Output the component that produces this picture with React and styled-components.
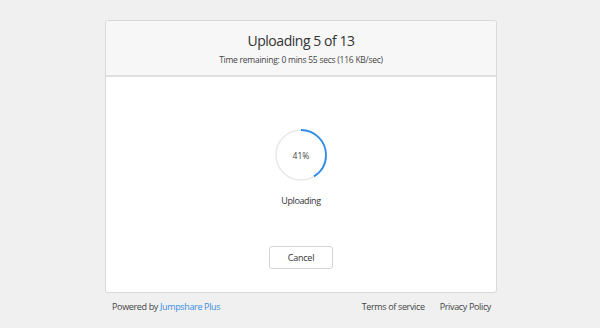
import React from 'react'
import styled, { createGlobalStyle } from 'styled-components'

const GlobalStyle = createGlobalStyle`
html, body {
  margin: 0;
  padding: 0;
  background: #f0f0f0;
  font-family: "Open Sans", "Noto Sans", sans-serif;
  color: #333;
}
`

const Page = styled.div`
width: 392px;
margin: 20px 0 0 105px;
`

const Card = styled.div`
background: #fff;
border: 1px solid #d9d9d9;
border-radius: 3px;
height: 273px;
box-sizing: border-box;
display: flex;
flex-direction: column;
overflow: hidden;
`

const Header = styled.div`
background: #f7f7f8;
border-bottom: 2px solid #e0e0e2;
height: 56px;
box-sizing: border-box;
display: flex;
flex-direction: column;
align-items: center;
padding-top: 10px;
`

const Title = styled.h1`
margin: 0;
font-size: 14px;
font-weight: 400;
letter-spacing: -0.45px;
line-height: 20px;
color: #333;
`

const Sub = styled.div`
margin-top: 2px;
font-size: 8.5px;
letter-spacing: -0.25px;
line-height: 14px;
color: #444;
`

const Body = styled.div`
flex: 1;
display: flex;
flex-direction: column;
align-items: center;
padding-top: 52px;
`

const Ring = styled.div`
position: relative;
width: 52px;
height: 52px;
`

const Percent = styled.span`
position: absolute;
inset: 0;
display: flex;
align-items: center;
justify-content: center;
font-size: 8.5px;
color: #444;
`

const Label = styled.div`
margin-top: 13px;
font-size: 9px;
letter-spacing: -0.4px;
line-height: 14px;
color: #333;
`

const Button = styled.button`
margin-top: 38px;
width: 64px;
height: 23px;
background: #fff;
border: 1px solid #d4d4d4;
border-radius: 3px;
font-family: inherit;
font-size: 9px;
letter-spacing: -0.2px;
color: #333;
padding: 0;
`

const Footer = styled.div`
display: flex;
align-items: center;
padding: 7px 6px 0 7px;
font-size: 9px;
letter-spacing: -0.35px;
line-height: 14px;
color: #444;
`

const Link = styled.a`
color: ${props => props.accent ? '#3a8ee6' : '#444'};
text-decoration: none;
margin-left: ${props => props.gap || 0}px;
`

const Spacer = styled.div`
flex: 1;
`

function Progress({ value }) {
  const r = 25
  const c = 2 * Math.PI * r
  return (
    <Ring>
      <svg width="52" height="52" viewBox="0 0 52 52">
        <circle cx="26" cy="26" r={r} fill="none" stroke="#e8e8e8" strokeWidth="1.5" />
        <circle
          cx="26" cy="26" r={r} fill="none" stroke="#2f8be6" strokeWidth="1.8"
          strokeDasharray={`${c * value / 100} ${c}`}
          transform="rotate(-90 26 26)"
        />
      </svg>
      <Percent>{value}%</Percent>
    </Ring>
  )
}

export default function App() {
  return (
    <Page>
      <GlobalStyle />
      <Card>
        <Header>
          <Title>Uploading 5 of 13</Title>
          <Sub>Time remaining: 0 mins 55 secs (116 KB/sec)</Sub>
        </Header>
        <Body>
          <Progress value={41} />
          <Label>Uploading</Label>
          <Button>Cancel</Button>
        </Body>
      </Card>
      <Footer>
        Powered by&nbsp;<Link accent href="#">Jumpshare Plus</Link>
        <Spacer />
        <Link href="#">Terms of service</Link>
        <Link href="#" gap={15}>Privacy Policy</Link>
      </Footer>
    </Page>
  )
}
